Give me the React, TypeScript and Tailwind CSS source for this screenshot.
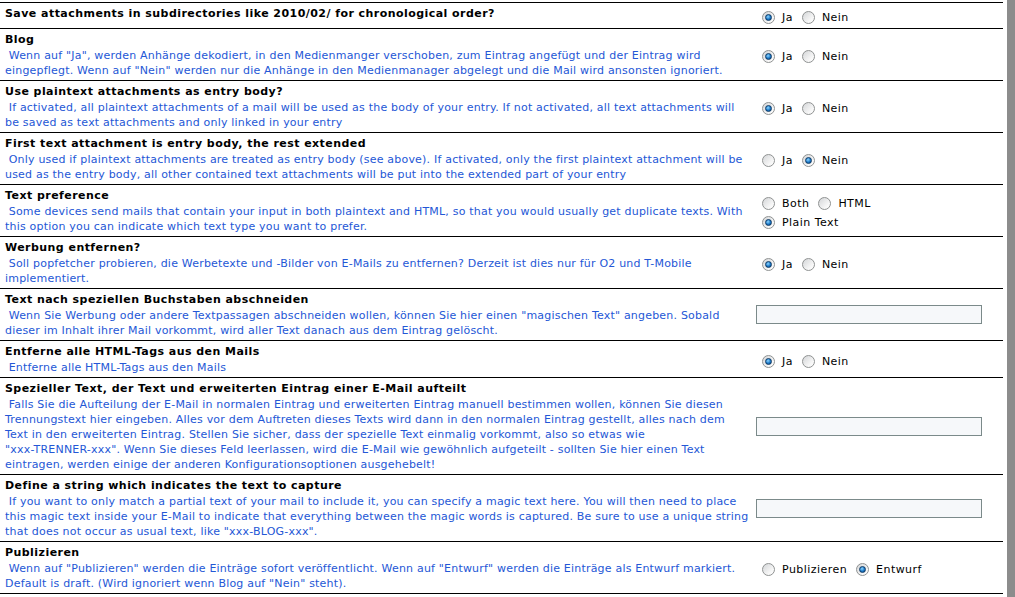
import type { ReactNode } from "react";

type Opt = { label: string; checked?: boolean };

function Radio({ checked }: { checked?: boolean }) {
  return (
    <span className="relative inline-flex h-[13px] w-[13px] shrink-0 items-center justify-center rounded-full border border-[#8f9292] bg-[linear-gradient(135deg,#d4d6d8,#f7f7f7_70%,#ffffff)]">
      {checked && (
        <span className="h-[7px] w-[7px] rounded-full border border-[#0d3a66] bg-[radial-gradient(circle_at_40%_35%,#8ed6ff,#1a78c8_55%,#0b3f73)]" />
      )}
    </span>
  );
}

function RadioGroup({ lines }: { lines: Opt[][] }) {
  return (
    <div className="ml-[6px] mt-[4px] flex flex-col gap-[6px]">
      {lines.map((line, i) => (
        <div key={i} className="flex h-[13px] items-center">
          {line.map((o) => (
            <span key={o.label} className="mr-[9px] flex items-center gap-[7px]">
              <Radio checked={o.checked} />
              <span className="leading-[13px] text-black">{o.label}</span>
            </span>
          ))}
        </div>
      ))}
    </div>
  );
}

function TextBox() {
  return <div className="h-[19px] w-[226px] border border-[#7b8a8a] bg-[#f6f8fa]" />;
}

// line breaks follow the original page's wrapping
function Row({
  title,
  desc,
  control,
  last,
}: {
  title: string;
  desc?: string[];
  control: ReactNode;
  last?: boolean;
}) {
  return (
    <div className={"flex border-t border-black" + (last ? " border-b" : "")}>
      <div className={"w-[751px] shrink-0 pl-[5px] pt-[3px] " + (desc ? "pb-[2px]" : "pb-[6px]")}>
        <div className="whitespace-nowrap font-bold leading-[16px] tracking-[0.45px] text-black">{title}</div>
        {desc &&
          desc.map((line, i) => (
            <div key={i} className="whitespace-nowrap leading-[15px] tracking-[0.2px] text-[#2457d6]">
              {i === 0 ? "\u00a0" : ""}
              {line}
            </div>
          ))}
      </div>
      <div className="flex flex-1 items-center pl-[5px]">{control}</div>
    </div>
  );
}

const ja: Opt[][] = [[{ label: "Ja", checked: true }, { label: "Nein" }]];
const nein: Opt[][] = [[{ label: "Ja" }, { label: "Nein", checked: true }]];

export default function App() {
  return (
    <div className="flex h-[597px] w-[1015px] overflow-hidden bg-white font-['DejaVu_Sans',Verdana,sans-serif] text-[11px] tracking-[0.45px]">
      <div className="w-[1003px] pt-[2px]">
        <Row
          title="Save attachments in subdirectories like 2010/02/ for chronological order?"
          control={<RadioGroup lines={ja} />}
        />
        <Row
          title="Blog"
          desc={[
            'Wenn auf "Ja", werden Anhänge dekodiert, in den Medienmanger verschoben, zum Eintrag angefügt und der Eintrag wird',
            'eingepflegt. Wenn auf "Nein" werden nur die Anhänge in den Medienmanager abgelegt und die Mail wird ansonsten ignoriert.',
          ]}
          control={<RadioGroup lines={ja} />}
        />
        <Row
          title="Use plaintext attachments as entry body?"
          desc={[
            "If activated, all plaintext attachments of a mail will be used as the body of your entry. If not activated, all text attachments will",
            "be saved as text attachments and only linked in your entry",
          ]}
          control={<RadioGroup lines={ja} />}
        />
        <Row
          title="First text attachment is entry body, the rest extended"
          desc={[
            "Only used if plaintext attachments are treated as entry body (see above). If activated, only the first plaintext attachment will be",
            "used as the entry body, all other contained text attachments will be put into the extended part of your entry",
          ]}
          control={<RadioGroup lines={nein} />}
        />
        <Row
          title="Text preference"
          desc={[
            "Some devices send mails that contain your input in both plaintext and HTML, so that you would usually get duplicate texts. With",
            "this option you can indicate which text type you want to prefer.",
          ]}
          control={
            <RadioGroup
              lines={[
                [{ label: "Both" }, { label: "HTML" }],
                [{ label: "Plain Text", checked: true }],
              ]}
            />
          }
        />
        <Row
          title="Werbung entfernen?"
          desc={[
            "Soll popfetcher probieren, die Werbetexte und -Bilder von E-Mails zu entfernen? Derzeit ist dies nur für O2 und T-Mobile",
            "implementiert.",
          ]}
          control={<RadioGroup lines={ja} />}
        />
        <Row
          title="Text nach speziellen Buchstaben abschneiden"
          desc={[
            'Wenn Sie Werbung oder andere Textpassagen abschneiden wollen, können Sie hier einen "magischen Text" angeben. Sobald',
            "dieser im Inhalt ihrer Mail vorkommt, wird aller Text danach aus dem Eintrag gelöscht.",
          ]}
          control={<TextBox />}
        />
        <Row
          title="Entferne alle HTML-Tags aus den Mails"
          desc={["Entferne alle HTML-Tags aus den Mails"]}
          control={<RadioGroup lines={ja} />}
        />
        <Row
          title="Spezieller Text, der Text und erweiterten Eintrag einer E-Mail aufteilt"
          desc={[
            "Falls Sie die Aufteilung der E-Mail in normalen Eintrag und erweiterten Eintrag manuell bestimmen wollen, können Sie diesen",
            "Trennungstext hier eingeben. Alles vor dem Auftreten dieses Texts wird dann in den normalen Eintrag gestellt, alles nach dem",
            "Text in den erweiterten Eintrag. Stellen Sie sicher, dass der spezielle Text einmalig vorkommt, also so etwas wie",
            '"xxx-TRENNER-xxx". Wenn Sie dieses Feld leerlassen, wird die E-Mail wie gewöhnlich aufgeteilt - sollten Sie hier einen Text',
            "eintragen, werden einige der anderen Konfigurationsoptionen ausgehebelt!",
          ]}
          control={<TextBox />}
        />
        <Row
          title="Define a string which indicates the text to capture"
          desc={[
            "If you want to only match a partial text of your mail to include it, you can specify a magic text here. You will then need to place",
            "this magic text inside your E-Mail to indicate that everything between the magic words is captured. Be sure to use a unique string",
            'that does not occur as usual text, like "xxx-BLOG-xxx".',
          ]}
          control={<TextBox />}
        />
        <Row
          title="Publizieren"
          desc={[
            'Wenn auf "Publizieren" werden die Einträge sofort veröffentlicht. Wenn auf "Entwurf" werden die Einträge als Entwurf markiert.',
            'Default is draft. (Wird ignoriert wenn Blog auf "Nein" steht).',
          ]}
          control={
            <RadioGroup
              lines={[[{ label: "Publizieren" }, { label: "Entwurf", checked: true }]]}
            />
          }
          last
        />
      </div>
      <div className="w-[4px]" />
      <div className="h-full w-[8px] bg-[#8c8c8c]" />
    </div>
  );
}
